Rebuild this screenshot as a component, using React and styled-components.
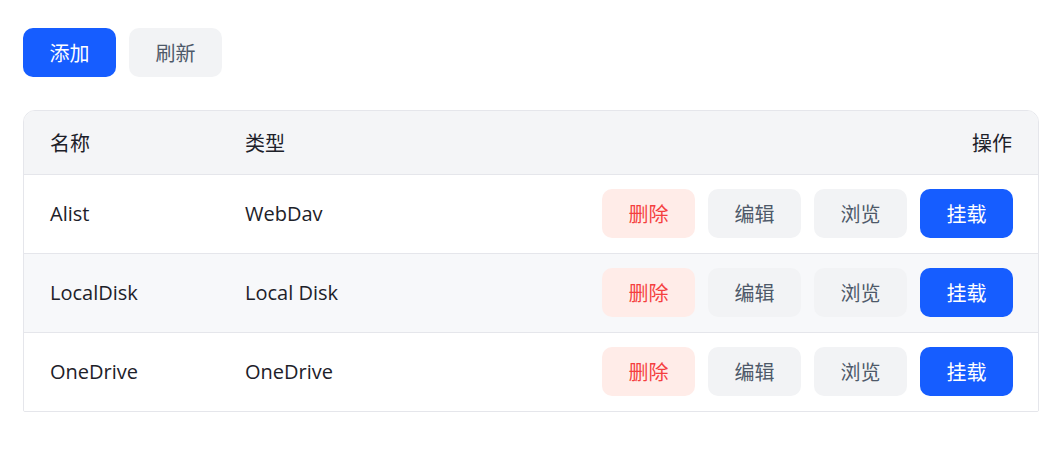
import styled, { createGlobalStyle } from "styled-components";

const rows = [
  { name: "Alist", type: "WebDav" },
  { name: "LocalDisk", type: "Local Disk" },
  { name: "OneDrive", type: "OneDrive" },
];

const GlobalStyle = createGlobalStyle`
  body {
    margin: 0;
    background: #fff;
    font-family: "Open Sans", "Noto Sans CJK SC", sans-serif;
    color: #1d2129;
  }
`;

const Page = styled.div`
  padding: 28px 24px 28px 23px;
  display: flex;
  flex-direction: column;
  gap: 33px;
`;

const Toolbar = styled.div`
  display: flex;
  gap: 13px;
`;

const variants = {
  primary: { bg: "#165dff", color: "#fff" },
  secondary: { bg: "#f2f3f5", color: "#4e5969" },
  danger: { bg: "#ffece8", color: "#f53f3f" },
};

const Button = styled.button`
  height: 49px;
  padding: 0 26.5px;
  border: none;
  border-radius: 10px;
  font-family: "Noto Sans CJK SC", sans-serif;
  font-size: 20px;
  font-weight: 400;
  background: ${(p) => variants[p.$variant].bg};
  color: ${(p) => variants[p.$variant].color};
  cursor: pointer;
`;

const TableWrap = styled.div`
  border: 1px solid #e5e6eb;
  border-radius: 12px 12px 2px 2px;
  overflow: hidden;
`;

const Table = styled.table`
  width: 100%;
  border-collapse: collapse;
  font-size: 20px;
`;

const HeadRow = styled.tr`
  height: 63px;
  background: #f4f5f7;
`;

const Th = styled.th`
  font-weight: 400;
  text-align: ${(p) => (p.$right ? "right" : "left")};
  padding: 0 26px 0 26px;
  font-family: "Noto Sans CJK SC", sans-serif;
  color: #1d2129;
  width: ${(p) => p.$width || "auto"};
`;

const Row = styled.tr`
  height: 79px;
  background: ${(p) => (p.$striped ? "#f7f8fa" : "#fff")};
  border-top: 1px solid #e5e6eb;
`;

const Td = styled.td`
  padding: 0 25px 0 26px;
  color: #1d2129;
`;

const Actions = styled.div`
  display: flex;
  justify-content: flex-end;
  gap: 13px;
`;

export default function App() {
  return (
    <>
      <GlobalStyle />
      <Page>
        <Toolbar>
          <Button $variant="primary">添加</Button>
          <Button $variant="secondary">刷新</Button>
        </Toolbar>
        <TableWrap>
          <Table>
            <thead>
              <HeadRow>
                <Th $width="143px">名称</Th>
                <Th>类型</Th>
                <Th $right>操作</Th>
              </HeadRow>
            </thead>
            <tbody>
              {rows.map((r, i) => (
                <Row key={r.name} $striped={i % 2 === 1}>
                  <Td>{r.name}</Td>
                  <Td>{r.type}</Td>
                  <Td>
                    <Actions>
                      <Button $variant="danger">删除</Button>
                      <Button $variant="secondary">编辑</Button>
                      <Button $variant="secondary">浏览</Button>
                      <Button $variant="primary">挂载</Button>
                    </Actions>
                  </Td>
                </Row>
              ))}
            </tbody>
          </Table>
        </TableWrap>
      </Page>
    </>
  );
}
